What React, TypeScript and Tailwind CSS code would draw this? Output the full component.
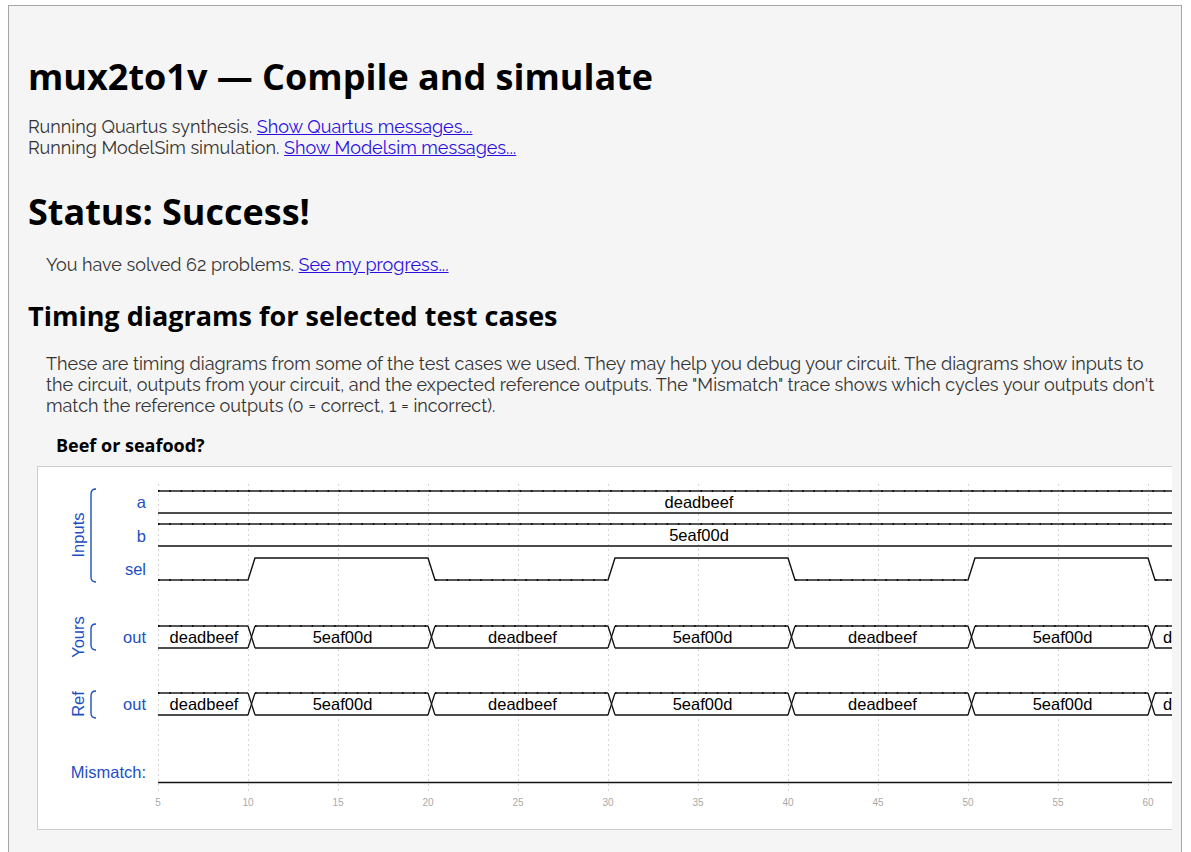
import React from "react";

const X = (t: number) => 158 + (t - 5) * 18;
const D = 7;
const BLUE = "#1d4fc4";
const FS = 16.5;

type Seg = { t0: number; t1: number; label: string };

function Bus({ top, segs }: { top: number; segs: Seg[] }) {
  const bot = top + 22;
  const mid = top + 11;
  const start = segs[0].t0;
  const end = segs[segs.length - 1].t1;
  const parts: React.ReactNode[] = [];
  segs.forEach((s, i) => {
    const xa = s.t0 === start ? X(s.t0) : X(s.t0) + D;
    const xb = X(s.t1);
    parts.push(
      <g key={"s" + i}>
        <line x1={xa} y1={top} x2={xb} y2={top} stroke="#555" strokeWidth={1.8} />
        <line x1={xa} y1={top} x2={xb} y2={top} stroke="#111" strokeWidth={2.2} strokeDasharray="1.6 9.7" />
        <line x1={xa} y1={bot} x2={xb} y2={bot} stroke="#111" strokeWidth={1.4} />
        <text x={(xa + xb) / 2 + 1} y={mid + 6} textAnchor="middle" fontSize={FS} fill="#000" fontFamily="'Liberation Sans', Arial, sans-serif">
          {s.label}
        </text>
      </g>
    );
    if (s.t1 !== end) {
      const xt = X(s.t1);
      parts.push(
        <g key={"x" + i}>
          <line x1={xt} y1={top} x2={xt + D} y2={bot} stroke="#111" strokeWidth={1.3} />
          <line x1={xt} y1={bot} x2={xt + D} y2={top} stroke="#111" strokeWidth={1.3} />
        </g>
      );
    }
  });
  return <g>{parts}</g>;
}

function Sel() {
  const hi = 558;
  const lo = 580;
  const edges = [10, 20, 30, 40, 50, 60];
  let v = 0;
  let d = `M${X(5)} ${lo}`;
  const lows: [number, number][] = [];
  let segStart = X(5);
  edges.forEach((t) => {
    const y = v ? hi : lo;
    d += ` L${X(t)} ${y}`;
    if (!v) lows.push([segStart, X(t)]);
    v = 1 - v;
    d += ` L${X(t) + D} ${v ? hi : lo}`;
    segStart = X(t) + D;
  });
  d += ` L${X(65)} ${v ? hi : lo}`;
  if (!v) lows.push([segStart, X(65)]);
  return (
    <g>
      <path d={d} fill="none" stroke="#111" strokeWidth={1.4} />
      {lows.map(([a, b], i) => (
        <g key={i}>
          <line x1={a} y1={lo} x2={b} y2={lo} stroke="#555" strokeWidth={1.8} />
          <line x1={a} y1={lo} x2={b} y2={lo} stroke="#111" strokeWidth={2.2} strokeDasharray="1.6 9.7" />
        </g>
      ))}
    </g>
  );
}

function Brace({ y1, y2 }: { y1: number; y2: number }) {
  return (
    <path
      d={`M96 ${y1} Q91 ${y1} 91 ${y1 + 5} L91 ${y2 - 5} Q91 ${y2} 96 ${y2}`}
      fill="none"
      stroke={BLUE}
      strokeWidth={1.4}
    />
  );
}

function Diagram() {
  const outSegs: Seg[] = [
    { t0: 5, t1: 10, label: "deadbeef" },
    { t0: 10, t1: 20, label: "5eaf00d" },
    { t0: 20, t1: 30, label: "deadbeef" },
    { t0: 30, t1: 40, label: "5eaf00d" },
    { t0: 40, t1: 50, label: "deadbeef" },
    { t0: 50, t1: 60, label: "5eaf00d" },
    { t0: 60, t1: 65, label: "deadbeef" },
  ];
  const ticks = [5, 10, 15, 20, 25, 30, 35, 40, 45, 50, 55, 60];
  const lbl = { fontSize: FS, fill: BLUE, fontFamily: "'Liberation Sans', Arial, sans-serif" } as const;
  return (
    <svg width={1134} height={362} viewBox="38 467 1134 362" className="block">
      {ticks.map((t) => (
        <g key={t}>
          <line x1={X(t) + 0.5} y1={484} x2={X(t) + 0.5} y2={792} stroke="#d6d6d6" strokeWidth={1} strokeDasharray="2 3" />
          <text x={X(t)} y={806} textAnchor="middle" fontSize={10} fill="#aaa" fontFamily="'Liberation Sans', Arial, sans-serif">
            {t}
          </text>
        </g>
      ))}
      <Bus top={491} segs={[{ t0: 5, t1: 65, label: "deadbeef" }]} />
      <Bus top={524} segs={[{ t0: 5, t1: 65, label: "5eaf00d" }]} />
      <Sel />
      <Bus top={626} segs={outSegs} />
      <Bus top={693} segs={outSegs} />
      <line x1={X(5)} y1={782.5} x2={X(65)} y2={782.5} stroke="#111" strokeWidth={1.4} />

      <text x={146} y={508} textAnchor="end" {...lbl}>a</text>
      <text x={146} y={542} textAnchor="end" {...lbl}>b</text>
      <text x={146} y={575} textAnchor="end" {...lbl}>sel</text>
      <text x={146} y={643} textAnchor="end" {...lbl}>out</text>
      <text x={146} y={710} textAnchor="end" {...lbl}>out</text>
      <text x={146} y={778} textAnchor="end" {...lbl}>Mismatch:</text>

      <text x={0} y={0} textAnchor="middle" transform="translate(84 535) rotate(-90)" {...lbl}>Inputs</text>
      <text x={0} y={0} textAnchor="middle" transform="translate(84 637) rotate(-90)" {...lbl}>Yours</text>
      <text x={0} y={0} textAnchor="middle" transform="translate(84 704) rotate(-90)" {...lbl}>Ref</text>
      <Brace y1={489} y2={582} />
      <Brace y1={624} y2={650} />
      <Brace y1={691} y2={718} />
    </svg>
  );
}

export default function App() {
  const body = "font-['Raleway','Lato',sans-serif] oldstyle-nums text-[18px] leading-[21px] text-[#333]";
  const head = "font-['Open_Sans',sans-serif] font-bold text-black";
  const link = "text-[#2a0ee0] underline";
  return (
    <div className="bg-white w-[1191px] h-[852px] overflow-hidden">
      <div className="ml-[8px] mt-[5px] w-[1174px] h-[900px] border border-[#a6a6a6] bg-[#f5f5f5] pl-[19px] pr-[9px]">
        <h1 className={`${head} text-[36px] leading-[40px] mt-[51px]`}>mux2to1v — Compile and simulate</h1>
        <div className={`${body} mt-[19px]`}>
          <div>
            Running Quartus synthesis. <a className={link}>Show Quartus messages...</a>
          </div>
          <div>
            Running ModelSim simulation. <a className={link}>Show Modelsim messages...</a>
          </div>
        </div>
        <h2 className={`${head} text-[36px] leading-[40px] mt-[34px]`}>Status: Success!</h2>
        <p className={`${body} mt-[22px] pl-[18px]`}>
          You have solved 62 problems. <a className={link}>See my progress...</a>
        </p>
        <h3 className={`${head} text-[27px] leading-[32px] mt-[25px]`}>Timing diagrams for selected test cases</h3>
        <p className={`${body} mt-[21px] pl-[18px]`}>
          These are timing diagrams from some of the test cases we used. They may help you debug your circuit. The diagrams show inputs to the circuit, outputs from your circuit, and the expected reference outputs. The "Mismatch" trace shows which cycles your outputs don't match the reference outputs (0 = correct, 1 = incorrect).
        </p>
        <div className={`${head} text-[18px] leading-[24px] mt-[17px] ml-[28px]`}>Beef or seafood?</div>
        <div className="mt-[9px] ml-[9px] w-[1135px] h-[364px] border-y border-l border-[#cccccc] bg-white overflow-hidden">
          <Diagram />
        </div>
      </div>
    </div>
  );
}
